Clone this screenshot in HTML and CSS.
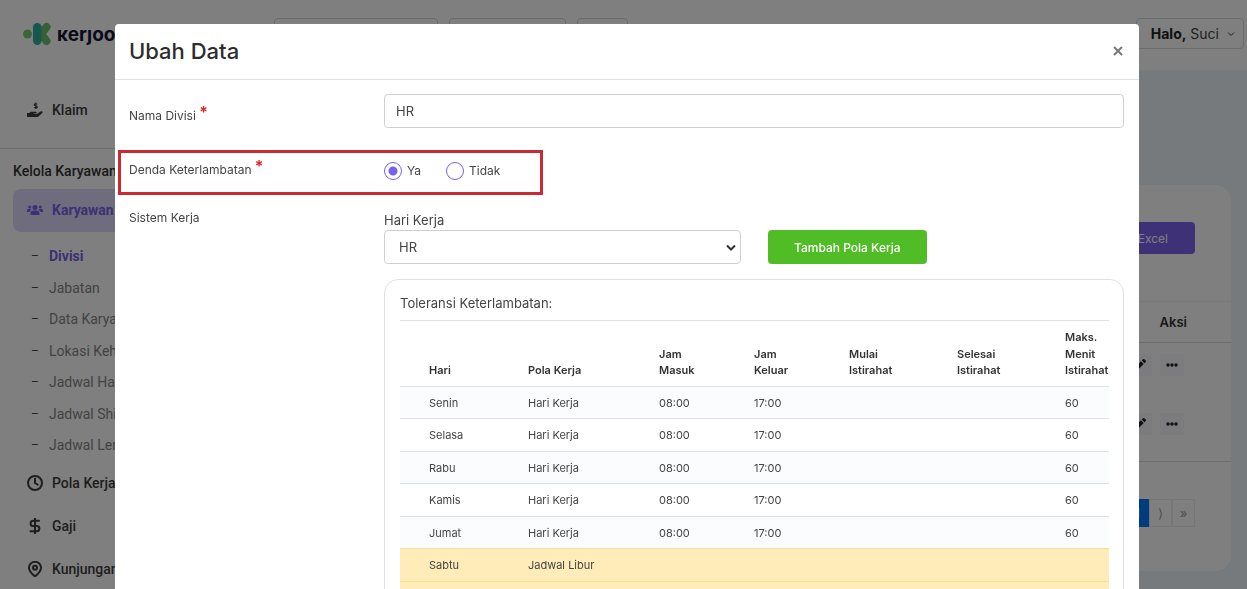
FILE: index.html
```html
<!DOCTYPE html>
<html lang="id">
<head>
<meta charset="utf-8">
<title>Kerjoo - Ubah Data</title>
<link rel="stylesheet" href="styles.css">
</head>
<body>
<div class="page">
  <aside class="sidebar">
    <div class="brand">
      <svg class="brand-mark" viewBox="0 0 28 24" width="28" height="24" aria-hidden="true">
        <circle cx="4.500" cy="12" r="4.500" fill="#7ccb70"/>
        <path d="M18 12 L23.500 5 M18 12 L23.500 19" stroke="#6fc06c" stroke-width="8" stroke-linecap="round" fill="none"/>
        <rect x="10" y="1" width="8.500" height="22" rx="4.200" fill="#2fae9c"/>
      </svg>
      <span class="brand-name">ĸerȷoo</span>
    </div>
    <nav class="menu">
      <a class="menu-item menu-first" href="#">
        <svg viewBox="0 0 16 16" width="16" height="16" fill="currentColor" aria-hidden="true"><path d="M0 11h2.200l1.600-1.200h5c1.200 0 1.200 1.700 0 1.700H6.500v.6h3.300l3.700-2.700c1.300-.8 2.600.3 1.800 1.500L10.800 15H0z"/><path d="M10.200 2.300C9.700 1.500 7.300 1.400 7.300 2.700c0 1.500 3 .7 3 2.200 0 1.400-2.600 1.300-3.100.3M8.800.4v6.500" fill="none" stroke="currentColor" stroke-width="1.100"/></svg>
        <span>Klaim</span>
      </a>
      <h2 class="menu-title">Kelola Karyawan</h2>
      <a class="menu-item menu-active" href="#">
        <svg viewBox="0 0 16 16" width="16" height="16" fill="currentColor" aria-hidden="true"><circle cx="8" cy="5.500" r="2.500"/><circle cx="2.700" cy="5" r="1.500"/><circle cx="13.300" cy="5" r="1.500"/><path d="M3.500 13v-1.500c0-3 2-3 4.500-3s4.500 0 4.500 3V13zM0 10V8.500c0-1.500 1-1.500 3.800-1.300L4.500 8C3 8.700 2.700 9 2.500 10zM16 10V8.500c0-1.500-1-1.500-3.800-1.300L11.500 8c1.500.7 1.800 1 2 2z"/></svg>
        <span>Karyawan</span>
      </a>
      <ul class="submenu">
        <li><a class="current" href="#">Divisi</a></li>
        <li><a href="#">Jabatan</a></li>
        <li><a href="#">Data Karyawan</a></li>
        <li><a href="#">Lokasi Kehadiran</a></li>
        <li><a href="#">Jadwal Harian</a></li>
        <li><a href="#">Jadwal Shift</a></li>
        <li><a href="#">Jadwal Lembur</a></li>
      </ul>
      <a class="menu-item" href="#">
        <svg class="line-icon" viewBox="0 0 16 16" width="16" height="16" aria-hidden="true"><circle cx="8" cy="8" r="7"/><path d="M8 3.800V8l2.700 1.600"/></svg>
        <span>Pola Kerja</span>
      </a>
      <a class="menu-item" href="#">
        <svg class="line-icon" viewBox="0 0 16 16" width="16" height="16" aria-hidden="true"><path d="M8 0v16M12 2.800H6.200a2.600 2.600 0 0 0 0 5.200h3.600a2.600 2.600 0 0 1 0 5.200H3.500"/></svg>
        <span>Gaji</span>
      </a>
      <a class="menu-item" href="#">
        <svg class="line-icon" viewBox="0 0 16 16" width="16" height="16" aria-hidden="true"><path d="M14 6.800c0 4-6 8.500-6 8.500S2 10.800 2 6.800a6 6 0 0 1 12 0z"/><circle cx="8" cy="6.800" r="2"/></svg>
        <span>Kunjungan</span>
      </a>
    </nav>
  </aside>
  <div class="main">
    <header class="topbar">
      <div class="top-box box-long"></div>
      <div class="top-box box-mid"></div>
      <div class="top-box box-short"></div>
      <button class="user" type="button"><span><b>Halo,</b> Suci</span>
        <svg viewBox="0 0 8 8" width="8" height="8" fill="none" stroke="currentColor" aria-hidden="true"><path d="M1 2.500l3 3 3-3"/></svg>
      </button>
    </header>
    <main class="content">
      <section class="panel">
        <div class="panel-tools"><button class="export" type="button">Export Excel</button></div>
        <div class="panel-head"><span>Aksi</span></div>
        <div class="panel-row">
          <button class="act" type="button" aria-label="Ubah"><svg viewBox="0 0 12 12" width="12" height="12" fill="currentColor"><path d="M0 12l.8-3.500L7 2.300 9.700 5l-6.200 6.200zM7.800 1.500L9 .3c.5-.4 1-.4 1.400 0L11.700 1.600c.4.500.4 1 0 1.400l-1.200 1.200z"/></svg></button>
          <button class="act" type="button" aria-label="Lainnya"><svg viewBox="0 0 12 12" width="12" height="12" fill="currentColor"><circle cx="2" cy="6" r="1.700"/><circle cx="6" cy="6" r="1.700"/><circle cx="10" cy="6" r="1.700"/></svg></button>
        </div>
        <div class="panel-row">
          <button class="act" type="button" aria-label="Ubah"><svg viewBox="0 0 12 12" width="12" height="12" fill="currentColor"><path d="M0 12l.8-3.500L7 2.300 9.700 5l-6.200 6.200zM7.800 1.500L9 .3c.5-.4 1-.4 1.400 0L11.700 1.600c.4.500.4 1 0 1.400l-1.200 1.200z"/></svg></button>
          <button class="act" type="button" aria-label="Lainnya"><svg viewBox="0 0 12 12" width="12" height="12" fill="currentColor"><circle cx="2" cy="6" r="1.700"/><circle cx="6" cy="6" r="1.700"/><circle cx="10" cy="6" r="1.700"/></svg></button>
        </div>
        <div class="pager"><a class="on" href="#">1</a><a href="#">⟩</a><a href="#">»</a></div>
      </section>
    </main>
  </div>
</div>

<div class="backdrop">
  <div class="modal" role="dialog" aria-labelledby="modal-title">
    <div class="modal-head">
      <h1 id="modal-title">Ubah Data</h1>
      <button class="close" type="button" aria-label="Tutup"><svg viewBox="0 0 10 10" width="10" height="10" fill="none" stroke="currentColor" stroke-width="2" aria-hidden="true"><path d="M1 1l8 8M9 1l-8 8"/></svg></button>
    </div>
    <form class="form">
      <label class="label label-name" for="nama">Nama Divisi <span class="req">*</span></label>
      <input class="text" id="nama" type="text" value="HR">

      <span class="label label-fine" id="denda">Denda Keterlambatan <span class="req">*</span></span>
      <div class="radios" role="radiogroup" aria-labelledby="denda">
        <label><input type="radio" name="denda" checked>Ya</label>
        <label><input type="radio" name="denda">Tidak</label>
      </div>
      <div class="highlight"></div>

      <span class="label label-system">Sistem Kerja</span>
      <div class="system">
        <label class="select-label" for="hari">Hari Kerja</label>
        <div class="picker">
          <span class="select-wrap">
            <select id="hari"><option>HR</option></select>
            <svg class="chevron" viewBox="0 0 10 8" width="10" height="8" fill="none" stroke="currentColor" stroke-width="2" aria-hidden="true"><path d="M1 1.500l4 4 4-4"/></svg>
          </span>
          <button class="add" type="button">Tambah Pola Kerja</button>
        </div>
        <div class="card">
          <p class="card-title">Toleransi Keterlambatan:</p>
          <div class="scroll">
            <table class="hours">
              <colgroup><col class="c-day"><col class="c-plan"><col class="c-in"><col class="c-in"><col class="c-break"><col class="c-break"><col class="c-max"></colgroup>
              <thead><tr><th>Hari</th><th>Pola Kerja</th><th>Jam<br>Masuk</th><th>Jam<br>Keluar</th><th>Mulai<br>Istirahat</th><th>Selesai<br>Istirahat</th><th>Maks.<br>Menit<br>Istirahat</th></tr></thead>
              <tbody>
                <tr><td>Senin</td><td>Hari Kerja</td><td>08:00</td><td>17:00</td><td></td><td></td><td>60</td></tr>
                <tr><td>Selasa</td><td>Hari Kerja</td><td>08:00</td><td>17:00</td><td></td><td></td><td>60</td></tr>
                <tr><td>Rabu</td><td>Hari Kerja</td><td>08:00</td><td>17:00</td><td></td><td></td><td>60</td></tr>
                <tr><td>Kamis</td><td>Hari Kerja</td><td>08:00</td><td>17:00</td><td></td><td></td><td>60</td></tr>
                <tr><td>Jumat</td><td>Hari Kerja</td><td>08:00</td><td>17:00</td><td></td><td></td><td>60</td></tr>
                <tr class="off"><td>Sabtu</td><td>Jadwal Libur</td><td></td><td></td><td></td><td></td><td></td></tr>
                <tr class="off"><td></td><td></td><td></td><td></td><td></td><td></td><td></td></tr>
              </tbody>
            </table>
          </div>
        </div>
      </div>
    </form>
  </div>
</div>
</body>
</html>
```
FILE: styles.css
```css
* { box-sizing: border-box; }
html, body { height: 100%; }
body { margin: 0; overflow: hidden; font-family: Inter, "Liberation Sans", sans-serif; font-size: 13px; color: #444; }
button, input, select { font: inherit; color: inherit; }
a { color: inherit; text-decoration: none; }

.page { display: flex; height: 100vh; overflow: hidden; background: #edf5fa; }
.sidebar { flex: 0 0 247px; background: #fff; font-family: Roboto, "Liberation Sans", sans-serif; font-size: 14px; font-weight: 500; box-shadow: 0 0 6px rgba(0, 0, 0, .12); }
.brand { display: flex; align-items: center; gap: 6px; height: 68px; padding-left: 23px; }
.brand-name { color: #141432; font-family: Inter, sans-serif; font-size: 19px; font-weight: 700; }
.menu-item { display: flex; align-items: center; gap: 9px; height: 43px; padding-left: 27px; color: #3c3c3c; }
.menu-first { height: 81px; padding-top: 4px; border-bottom: 1px solid #d8dadd; }
.menu-title { margin: 0; padding: 2px 13px 0; height: 40px; line-height: 40px; font-size: 14px; font-weight: 500; color: #333; }
.menu-active { margin: 0 13px; padding: 0 0 2px 14px; border-radius: 8px; background: #dfd8fb; color: #7662ea; font-weight: 700; }
.submenu { margin: 0; padding: 9px 0 0; list-style: none; line-height: 2.25; color: #858585; }
.submenu li { display: flex; padding-left: 31px; font-weight: 400; }
.submenu li::before { content: "–"; width: 18px; font-size: 12px; line-height: 31px; color: #444; }
.submenu .current { color: #7662ea; font-weight: 700; }
.line-icon { fill: none; stroke: currentColor; stroke-width: 2; stroke-linecap: round; stroke-linejoin: round; }

.main { flex: 1; min-width: 0; }
.topbar { display: flex; align-items: flex-start; gap: 11px; height: 70px; padding: 18px 3px 0 27px; background: #fff; }
.top-box { height: 32px; border: 1px solid #d4d6d8; border-radius: 4px; }
.box-long { width: 164px; }
.box-mid { width: 117px; }
.box-short { width: 51px; }
.user { display: flex; align-items: center; gap: 8px; height: 31px; margin-left: auto; padding: 0 8px 0 14px; border: 1px solid #d4d8da; border-radius: 4px; background: #fff; font-size: 14px; }
.user b { color: #222; }
.content { padding: 115px 16px 0; }
.panel { height: 386px; border-radius: 16px; background: #fff; }
.panel-tools { display: flex; justify-content: flex-end; height: 116px; padding: 37px 36px 0; }
.export { height: 32px; padding: 0 27px; border: 0; border-radius: 4px; background: #7c62f0; color: #fff; font-size: 12px; }
.panel-head { display: flex; justify-content: flex-end; align-items: center; height: 42px; padding-right: 44px; border-top: 1px solid #f2f2f2; border-bottom: 1px solid #d8dadd; font-weight: 600; color: #333; }
.panel-row { display: flex; justify-content: flex-end; gap: 8px; height: 59px; padding: 11px 47px 0; }
.panel-row + .panel-row { height: 60px; border-bottom: 1px solid #d8dadd; }
.act { display: grid; place-items: center; width: 24px; height: 22px; padding: 0; border: 0; background: #f8f8fc; color: #222; }
.pager { display: flex; justify-content: flex-end; padding: 37px 36px 0; }
.pager a { display: grid; place-items: center; width: 23px; height: 28px; border: 1px solid #ececec; color: #999; }
.pager .on { border-color: #007bff; background: #007bff; color: #fff; }

.backdrop { position: fixed; inset: 0; padding: 24px 108px 0 115px; background: rgba(0, 0, 0, .5); }
.modal { min-height: 100%; border-radius: 4px 4px 0 0; background: #fff; }
.modal-head { display: flex; align-items: center; justify-content: space-between; height: 56px; padding: 0 16px 2px 14px; border-bottom: 1px solid #dee2e6; }
.modal-head h1 { margin: 0; font-size: 22px; font-weight: 500; color: #2d2d2d; }
.close { display: grid; place-items: center; padding: 0; border: 0; background: none; color: #777; }
.form { position: relative; display: grid; grid-template-columns: 255px minmax(0, 1fr); padding: 14px 15px 0 14px; }
.label { font-size: 12px; line-height: 18px; }
.label-name { padding-top: 13px; }
.label-fine { padding-top: 33px; }
.label-system { padding-top: 29px; }
.req { color: #e02020; font-size: 16px; font-weight: 600; line-height: 10px; vertical-align: 2px; }
.text, select { width: 100%; height: 34px; border: 1px solid #cdd0d4; border-radius: 4px; background: #fff; font-size: 13px; }
.text { padding: 0 11px; }
.radios { display: flex; align-items: center; gap: 25px; padding-top: 33px; height: 52px; font-size: 12px; }
.radios label { display: flex; align-items: center; gap: 5px; }
.radios input { appearance: none; width: 18px; height: 18px; margin: 0; border: 1px solid #7662ea; border-radius: 50%; background: #fff; }
.radios input:checked { background: radial-gradient(circle, #7662ea 4px, #fff 5px); }
.highlight { position: absolute; left: 3px; top: 70px; width: 425px; height: 45px; border: 3px solid #cc2a30; pointer-events: none; }
.system { padding-top: 32px; }
.select-label { display: block; font-size: 13px; line-height: 16px; padding-bottom: 2px; }
.picker { display: flex; gap: 27px; }
.select-wrap { position: relative; flex: 0 1 357px; }
select { appearance: none; padding: 0 14px; }
.chevron { position: absolute; right: 5px; top: 14px; pointer-events: none; color: #333; }
.add { height: 34px; padding: 0 26px; border: 0; border-radius: 4px; background: #50bc26; color: #fff; font-size: 12px; font-weight: 500; white-space: nowrap; }
.card { margin-top: 15px; padding: 0 14px 0 15px; border: 1px solid #dee2e6; border-radius: 14px; }
.card-title { margin: 0; padding: 13px 0 7px; font-size: 13px; line-height: 20px; }
.scroll { overflow: hidden; }
.hours { width: 737px; table-layout: fixed; border-spacing: 0; font-size: 11px; line-height: 1.5; }
.c-day { width: 99px; }
.c-plan { width: 131px; }
.c-in { width: 95px; }
.c-break { width: 108px; }
.c-max { width: 101px; }
.hours th, .hours td { height: 32px; padding: 9px 0 7px 29px; text-align: left; vertical-align: bottom; box-shadow: inset 0 1px #dee2e6; }
.hours th { font-weight: 600; color: #333; }
.hours tbody tr:nth-child(odd) { background: #fafcfd; }
.hours tbody tr.off { background: #ffecb9; }
.hours .off td { box-shadow: inset 0 1px #fbdf90; }
```
